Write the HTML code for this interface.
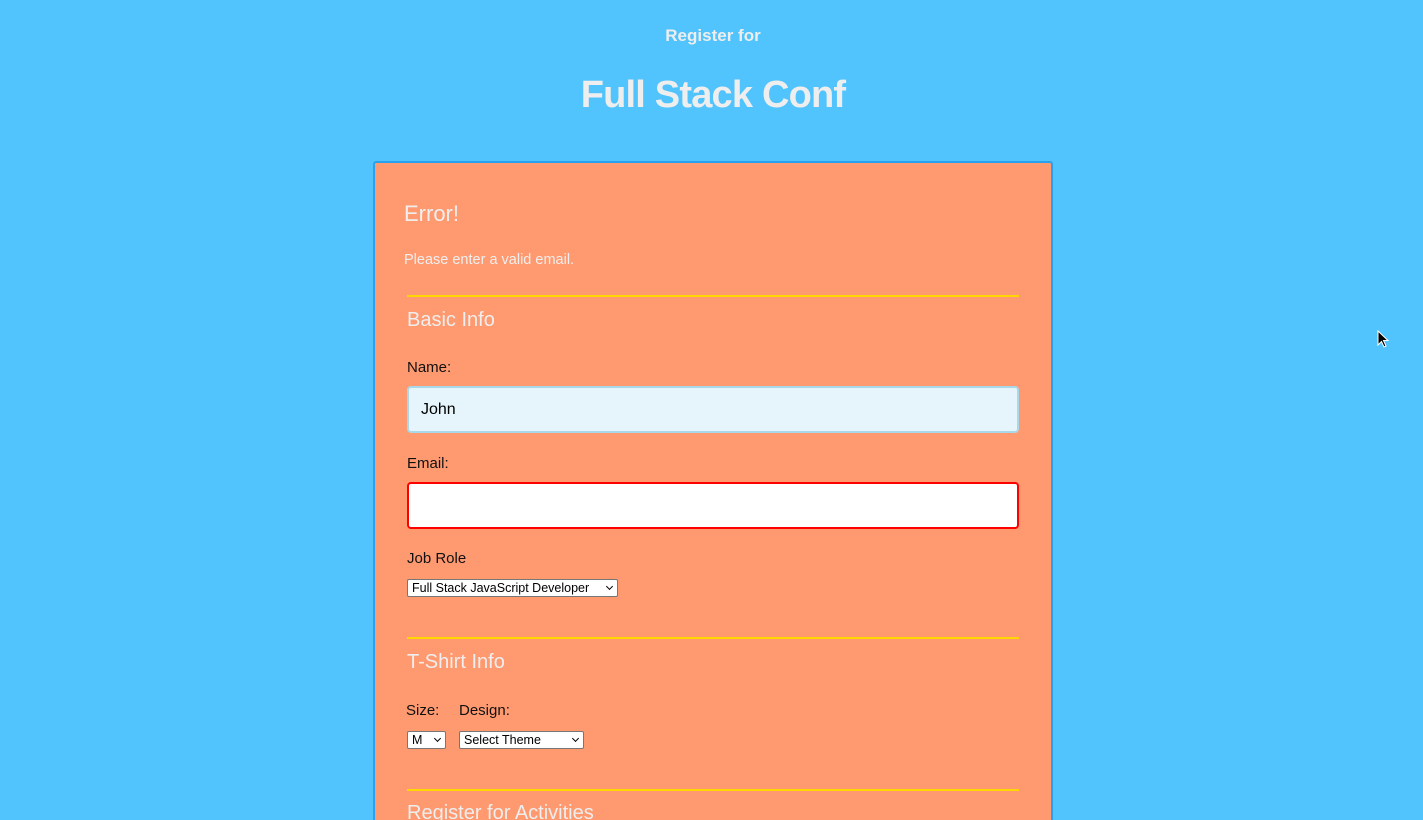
<!DOCTYPE html>
<html><head><meta charset="utf-8"><style>
html,body{margin:0;padding:0;width:1423px;height:820px;overflow:hidden;background:#51c3fd;font-family:"Liberation Sans",sans-serif;}
#wrap{position:relative;width:1423px;height:820px;overflow:hidden;}
.a{position:absolute;white-space:nowrap;}
.w{color:#eeeeee;}
.line{position:absolute;left:407px;width:612px;height:2px;background:#ffd600;}
.lbl{font-size:15px;color:#111;}
.inp{position:absolute;left:407px;width:612px;box-sizing:border-box;border-radius:4px;}
.sel{position:absolute;height:18px;background:#fff;border:1px solid #777;border-radius:2px;box-sizing:border-box;font-size:12.5px;line-height:16px;padding-left:4px;color:#000;}
.sel:after{content:"";position:absolute;right:5px;top:4px;width:4px;height:4px;border-right:1.8px solid #000;border-bottom:1.8px solid #000;transform:rotate(45deg);}
</style></head><body><div id="wrap">
<div class="a w" style="left:0;width:1426px;text-align:center;top:26px;font-size:17px;font-weight:bold;">Register for</div>
<div class="a w" style="left:0;width:1426px;text-align:center;top:74px;font-size:38px;font-weight:bold;letter-spacing:-0.8px;">Full Stack Conf</div>
<div style="position:absolute;left:373px;top:161px;width:680px;height:659px;background:#ff9a70;border:2px solid #2aa1ee;border-bottom:none;border-radius:3px 3px 0 0;box-sizing:border-box;"></div>
<div class="a w" style="left:404px;top:201px;font-size:22px;">Error!</div>
<div class="a w" style="left:404px;top:252px;font-size:14.5px;">Please enter a valid email.</div>
<div class="line" style="top:295px"></div>
<div class="a w" style="left:407px;top:309px;font-size:20px;">Basic Info</div>
<div class="a lbl" style="left:407px;top:359px;">Name:</div>
<div class="inp" style="top:386px;height:47px;background:#e6f5fc;border:2px solid #a9d8ea;"></div>
<div class="a" style="left:421px;top:401px;font-size:16px;color:#000;">John</div>
<div class="a lbl" style="left:407px;top:455px;">Email:</div>
<div class="inp" style="top:482px;height:47px;background:#fff;border:2px solid #f00;"></div>
<div class="a lbl" style="left:407px;top:550px;">Job Role</div>
<div class="sel" style="left:407px;top:579px;width:211px;">Full Stack JavaScript Developer</div>
<div class="line" style="top:637px"></div>
<div class="a w" style="left:407px;top:651px;font-size:20px;">T-Shirt Info</div>
<div class="a lbl" style="left:406px;top:702px;">Size:</div>
<div class="a lbl" style="left:459px;top:702px;">Design:</div>
<div class="sel" style="left:407px;top:731px;width:39px;">M</div>
<div class="sel" style="left:459px;top:731px;width:125px;">Select Theme</div>
<div class="line" style="top:789px"></div>
<div class="a w" style="left:407px;top:802px;font-size:20px;height:18px;overflow:hidden;">Register for Activities</div>
<svg style="position:absolute;left:1377px;top:330px" width="14" height="20" viewBox="0 0 14 20"><path d="M1 1 L1 15 L4.5 11.5 L7 17 L9 16 L6.5 10.5 L11 10.5 Z" fill="#000" stroke="#fff" stroke-width="1"/></svg>
</div></body></html>
